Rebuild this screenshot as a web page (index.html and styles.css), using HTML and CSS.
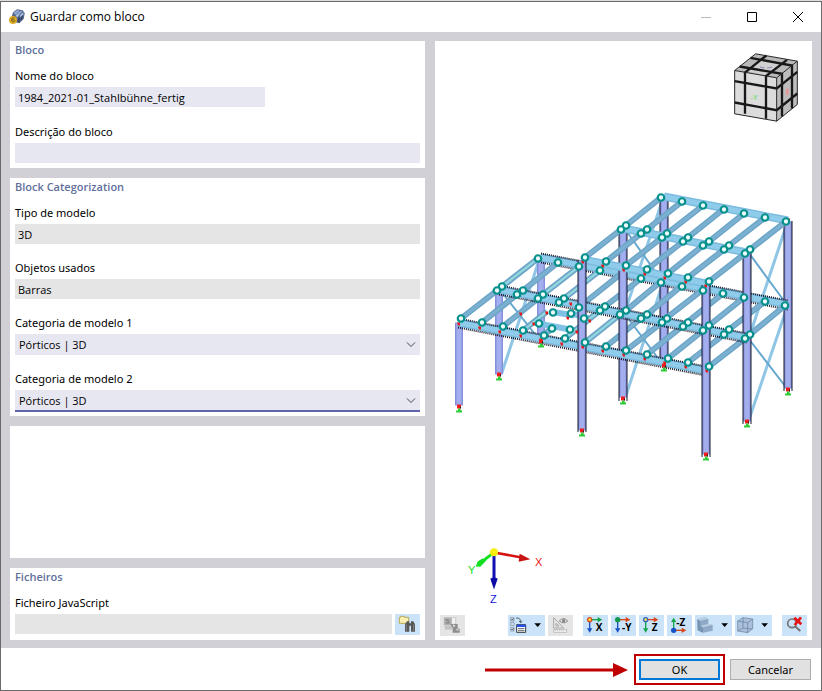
FILE: index.html
```html
<!DOCTYPE html>
<html lang="pt">
<head>
<meta charset="utf-8">
<title>Guardar como bloco</title>
<link rel="stylesheet" href="styles.css">
</head>
<body>
<main class="window">
  <header class="titlebar">
    <svg class="app-icon" viewBox="0 0 48 48" aria-hidden="true">
      <path fill="#53678c" d="M12 10 24 1l17 3 6 9-3 17-13 13-15-4L9 20z"/>
      <path fill="#8fa9d4" d="M13 11 25 3l7 2-12 12zM27 11l8-6 5 2-9 10z"/>
      <path fill="#a8bedf" d="M20 19l8-7 3 6-7 8zM33 18l9-8 2 6-10 9z"/>
      <path fill="#2c3b58" d="M29 25l4 1-2 14-5-1zM37 23l5-4-3 12-4 3z"/>
      <circle cx="12" cy="33" r="12" fill="#dbab28"/>
      <path fill="none" stroke="#7b5b12" stroke-width="3" d="M16 27c-6-2-9 2-8 8 1 5 9 4 9 0s-7-4-9-1"/>
    </svg>
    <h1 class="title">Guardar como bloco</h1>
    <div class="window-controls">
      <button class="win-btn" aria-label="Minimizar" disabled><svg viewBox="0 0 12 12"><path d="M1 6.500H11" stroke="#bbb"/></svg></button>
      <button class="win-btn" aria-label="Maximizar"><svg viewBox="0 0 12 12"><path d="M1.500 1.500h9v9h-9z" stroke="#000" fill="none"/></svg></button>
      <button class="win-btn" aria-label="Fechar"><svg viewBox="0 0 12 12"><path d="M1 1l10 10M11 1 1 11" stroke="#000"/></svg></button>
    </div>
  </header>

  <div class="content">
    <form class="column">
      <section class="panel panel-block">
        <h2 class="panel-title">Bloco</h2>
        <div class="fields fields-wide">
          <div class="field">
            <label for="name">Nome do bloco</label>
            <input class="box box-name" id="name" type="text" value="1984_2021-01_Stahlbühne_fertig">
          </div>
          <div class="field">
            <label for="desc">Descrição do bloco</label>
            <input class="box" id="desc" type="text">
          </div>
        </div>
      </section>
      <section class="panel panel-category">
        <h2 class="panel-title">Block Categorization</h2>
        <div class="fields">
          <div class="field">
            <label for="type">Tipo de modelo</label>
            <input class="box box-readonly" id="type" type="text" value="3D" readonly>
          </div>
          <div class="field">
            <label for="objects">Objetos usados</label>
            <input class="box box-readonly" id="objects" type="text" value="Barras" readonly>
          </div>
          <div class="field">
            <label for="cat1">Categoria de modelo 1</label>
            <div class="select-wrap">
              <select class="box select" id="cat1"><option>Pórticos | 3D</option></select>
              <svg class="chevron" viewBox="0 0 10 6" aria-hidden="true"><path d="M1 .5l4 4 4-4"/></svg>
            </div>
          </div>
          <div class="field">
            <label for="cat2">Categoria de modelo 2</label>
            <div class="select-wrap">
              <select class="box select select-active" id="cat2"><option>Pórticos | 3D</option></select>
              <svg class="chevron" viewBox="0 0 10 6" aria-hidden="true"><path d="M1 .5l4 4 4-4"/></svg>
            </div>
          </div>
        </div>
      </section>
      <section class="panel"></section>
      <section class="panel panel-block">
        <h2 class="panel-title">Ficheiros</h2>
        <div class="fields">
          <div class="field">
            <label for="file">Ficheiro JavaScript</label>
            <div class="file-row">
              <input class="box box-readonly" id="file" type="text" readonly>
              <button class="tool" type="button" aria-label="Procurar ficheiro">
                <svg class="icon" viewBox="0 0 75 63">
                  <path fill="#faf0b4" stroke="#b9aa55" stroke-width="3" d="M13 10h4V7h11v3h13v18H13z"/>
                  <path fill="#575757" d="M36 22h7v6h5v-6h7l5 9v22H48V35h-5v18H30V31z"/>
                  <path stroke="#999" stroke-width="2" d="M34 31v19M56 31v19"/>
                </svg>
              </button>
            </div>
          </div>
        </div>
      </section>
    </form>

    <section class="panel preview">
      <svg class="scene" viewBox="435 41 377 568" role="img" aria-label="Modelo 3D">
        <defs>
          <marker id="node" markerUnits="userSpaceOnUse" markerWidth="12" markerHeight="12" refX="6" refY="6">
            <circle cx="6" cy="6" r="3.250" fill="#eefafa" stroke="#07918d" stroke-width="2.200"/>
          </marker>
          <marker id="hinge" markerUnits="userSpaceOnUse" markerWidth="4" markerHeight="4" refX="2" refY="2">
            <path fill="#e81818" d="M0 1h3v3H1z"/>
          </marker>
          <g id="support"><path fill="#ef1c1c" d="M-2-3h4v4h-4z"/><path fill="#222" d="M1-1h1v2H1z"/><path fill="#2fcc38" d="M-1 1h2l1 2h1v2h-6V3h2z"/></g>
          <path id="roof-back" d="M664 196L788 220"/>
          <path id="roof-mid" d="M623 228L747 252"/>
          <path id="roof-front" d="M582 259L706 283"/>
          <path id="floor-back" d="M541 257L788 304"/>
          <path id="floor-mid" d="M499 289L747 337"/>
          <path id="floor-front" d="M458 322L706 370"/>
          <path id="columns-left" d="M541 256V338M499 290V374M459 322V405"/>
          <path id="columns-back" d="M664 197V364M788 221V388"/>
          <path id="columns-mid" d="M623 228V397M747 252V421"/>
          <path id="columns-front" d="M582 260V430M706 285V454"/>
          <path id="roof-purlins" d="M661 197l-35 28M682 201l-35 28M703 205l-36 28M723 209l-35 28M744 213l-35 28M765 217l-36 28M786 221l-36 28M621 229l-36 28M641 233l-35 28M662 237l-36 28M683 241l-36 28M703 245l-35 28M724 249l-36 28M745 253l-36 28"/>
          <path id="floor-purlins" d="M538 258l-36 28M558 262l-35 28M579 266l-36 28M600 270l-36 28M620 274l-35 28M641 278l-36 28M661 281l-35 29M682 285l-35 29M703 289l-36 28M723 293l-35 28M744 297l-35 28M765 301l-36 28M785 305l-35 29M497 290l-36 28M517 294l-35 28M538 298l-35 28M547 311l-24 19M552 328l-8 6M600 310l-35 28M620 314l-35 28M641 318l-35 28M662 322l-36 28M682 326l-35 28M703 330l-35 28M724 334l-36 28M745 338l-36 28"/>
        </defs>

        <g class="brace">
          <path d="M786 226L750 334M786 310L749 419M662 201L626 308M662 285L626 395M539 260L502 372"/>
          <path class="brace-thin" d="M750 254l36 49M750 340l37 48M626 230l35 49M626 315l36 48M502 292l38 48"/>
        </g>

        <use href="#columns-left" class="column-edge"/><use href="#columns-left" class="column-face"/>
        <use href="#columns-back" class="column-edge"/><use href="#columns-back" class="column-face"/>
        <path class="dots" d="M660 198V366M668 198V366M784 221V390M792 221V390"/>
        <use href="#roof-back" class="beam-edge"/><use href="#roof-back" class="beam-face"/>
        <use href="#floor-back" class="beam-edge"/><use href="#floor-back" class="beam-face"/>
        <path class="dots" d="M541 253l247 47M541 262l247 47"/>

        <g class="small-beam"><path d="M550 311l24 4M536 322l16 4M549 325l26 5M572 313l17 5"/></g>
        <use href="#floor-purlins" class="purlin-edge"/><use href="#floor-purlins" class="purlin-face"/>
        <path class="purlin-glow" d="M538 258l-36 28M579 266l-36 28M600 270l-36 28M547 311l-24 19M600 310l-35 28M620 314l-35 28"/>

        <use href="#columns-mid" class="column-edge"/><use href="#columns-mid" class="column-face"/>
        <path class="dots" d="M619 229V400M627 229V400M743 252V423M751 252V423"/>
        <use href="#floor-mid" class="beam-edge"/><use href="#floor-mid" class="beam-face"/>
        <path class="dots" d="M499 285l248 48M499 294l248 48"/>
        <use href="#roof-mid" class="beam-edge"/><use href="#roof-mid" class="beam-face"/>
        <use href="#roof-purlins" class="purlin-edge"/><use href="#roof-purlins" class="purlin-face"/>
        <use href="#roof-front" class="beam-edge"/><use href="#roof-front" class="beam-face"/>
        <use href="#floor-front" class="beam-edge"/><use href="#floor-front" class="beam-face"/>
        <path class="dots" d="M458 318l248 48M458 327l248 48"/>
        <use href="#columns-front" class="column-edge"/><use href="#columns-front" class="column-face"/>
        <path class="dots" d="M578 260V432M586 260V432M702 285V456M710 285V456"/>

        <polyline class="hinges" points="459,323 480,327 500,331 521,335 541,339 562,343 583,346 603,350 624,354 645,358 665,362 686,366 707,370"/>
        <polyline class="hinges" points="583,261 603,265 624,269 645,273 665,277 686,281 706,285"/>
        <polyline class="hinges" points="685,200 705,204 726,208 747,212 767,216 789,219"/>
        <polyline class="hinges" points="521,313 547,312 568,317 571,303 590,320 577,331 534,323"/>

        <polyline class="nodes" points="661,197 682,201 703,205 724,209 744,213 765,217 786,221"/>
        <polyline class="nodes" points="626,225 647,229 667,233 688,237 709,241 729,245 750,249"/>
        <polyline class="nodes" points="621,229 641,233 662,237 683,241 703,245 724,249 745,253"/>
        <polyline class="nodes" points="585,257 606,261 626,265 647,269 668,273 688,277 709,281"/>
        <polyline class="nodes" points="538,258 558,262 579,266 600,270"/>
        <polyline class="nodes" points="641,278 661,282 682,286 703,290 723,293 744,297 765,301 785,305"/>
        <polyline class="nodes" points="502,286 523,290 543,294 564,298 579,307 605,306 626,310 647,314 667,318 688,322 709,325 729,329 750,334"/>
        <polyline class="nodes" points="497,290 517,294 538,298 559,302 600,310 620,314 641,318 662,322 683,326 703,330 724,334 745,338"/>
        <polyline class="nodes" points="461,318 482,322 503,326 523,330 544,335 565,338 585,342 606,346 626,350 647,354 668,358 688,362 709,366"/>
        <polyline class="nodes" points="553,312 571,313 584,318 570,329 552,328 539,323"/>

        <use href="#support" x="459" y="407"/><use href="#support" x="499" y="375"/><use href="#support" x="541" y="342"/>
        <use href="#support" x="582" y="431"/><use href="#support" x="623" y="399"/><use href="#support" x="664" y="366"/>
        <use href="#support" x="706" y="455"/><use href="#support" x="747" y="422"/><use href="#support" x="788" y="390"/>

        <g transform="translate(715 0) scale(.3333)">
          <path fill="#dcdcdc" d="M59 210L185 232V362L59 340z"/>
          <path fill="#b9b9b9" d="M59 210L122 160 247 182 185 232z"/>
          <path fill="#bdbdbd" d="M185 232L247 182V312L185 362z"/>
          <path fill="#d0d0d0" d="M90 211L137 174 202 186 155 224z"/>
          <g fill="none" stroke="#181818" stroke-width="7">
            <path d="M90 340V216L154 165M153 355V227L216 178"/>
            <path d="M59 242L185 264 247 214M59 306L185 329 247 279"/>
            <path d="M74 198L201 220V348M106 172L231 195V324"/>
          </g>
          <path fill="none" stroke="#252525" stroke-width="3" d="M59 210L122 160 247 182V312L185 362 59 340zL185 232V362M185 232L247 182"/>
          <text class="cube-label" x="107" y="298">-Y</text>
          <path fill="#e59a9a" d="M213 267l8-5v19l-8 4z"/>
          <path stroke="#9696c2" stroke-width="4" d="M135 200l14 2M156 203l15-3"/>
        </g>

        <g transform="translate(455 540) scale(.3333)">
          <path stroke="#10e020" stroke-width="9" d="M118 35L84 61"/>
          <path fill="#10e020" d="M94 60L76 79 62 78 68 63 82 54z"/>
          <path stroke="#d51212" stroke-width="8" d="M118 36L200 51"/>
          <path fill="#c91414" d="M194 40L226 56 191 64z"/>
          <path stroke="#1010b4" stroke-width="9" d="M117 38V120"/>
          <path fill="#0c0ca4" d="M106 115q11-8 22 0L117 147z"/>
          <circle cx="117" cy="35" r="12" fill="#f6ee0c"/>
        </g>
        <g class="axis-labels">
          <text fill="#ec1717" x="535" y="565">X</text>
          <text fill="#13dc22" x="468" y="573">Y</text>
          <text fill="#1717e0" x="490" y="602">Z</text>
        </g>
      </svg>

      <div class="toolbar">
        <button class="tool tool-off tool-first" aria-label="Texturas" disabled><svg class="icon" viewBox="0 0 75 63">
          <path fill="#d2d2d2" d="M11 6h38v25H11z"/><path fill="#b0b0b0" d="M12 8h23v22H12z"/><path fill="#909090" d="M17 12h9v6h-9zM17 22l12-5v9H17z"/><path fill="#f0f0f0" d="M36 9h9v17h-9z"/><path fill="#c4c4c4" d="M14 31h22v13H14z"/><path fill="#8d8d8d" d="M31 27h22v13H38zM38 38l21 3v12H38z"/><path fill="#efefef" d="M39 28l8 5-7 3zM46 43h9v5z"/></svg></button>
        <button class="tool tool-wide" aria-label="Opções de visualização"><svg class="icon icon-wide" viewBox="0 0 111 63">
          <path fill="none" stroke="#7d8793" stroke-width="2" d="M8 8h10v10H8zM8 22h10v10H8zM8 38h10v10H8z"/><path fill="none" stroke="#222" stroke-width="2" d="M10 12l3 3 4-5M10 42l3 3 4-5M24 9q14-2 14 13M33 18l5 5 5-5"/><path fill="#fff" stroke="#33383d" stroke-width="3" d="M26 29h27v23H26z"/><path fill="#2451ed" d="M27 29h26v7H27z"/><path stroke="#59616a" stroke-width="3" d="M30 41h19M30 47h19"/><path d="M79 25h20L89 36z"/></svg></button>
        <button class="tool tool-off" aria-label="Medir" disabled><svg class="icon" viewBox="0 0 75 63">
          <path fill="none" stroke="#aaa" stroke-width="3" d="M17 8V39H47zM24 25v8h9z"/><path fill="#f4f4f4" stroke="#aaa" stroke-width="2" d="M17 43h39v9H17z"/><path stroke="#aaa" stroke-width="2" d="M23 44v4M29 44v4M35 44v4M41 44v4M47 44v4"/><path fill="#eee" stroke="#858585" stroke-width="3" d="M34 18q13-14 25 0-12 11-25 0z"/><circle cx="47" cy="17" r="5" fill="#858585"/></svg></button>
        <button class="tool tool-group" aria-label="Vista em X"><svg class="icon axis" viewBox="0 0 75 63">
          <path stroke="#12a64c" d="M20 14h27"/><path fill="#12a64c" d="M44 6l14 8-14 8z"/><path stroke="#1850c7" d="M20 14v30"/><path fill="#1850c7" d="M12 40h16l-8 13z"/><circle cx="20" cy="14" r="6" fill="#ffe64b" stroke="#dc4415"/><text x="38" y="48">X</text></svg></button>
        <button class="tool" aria-label="Vista em -Y"><svg class="icon axis" viewBox="0 0 75 63">
          <path stroke="#d94517" d="M20 14h27"/><path fill="#d94517" d="M44 6l14 8-14 8z"/><path stroke="#1850c7" d="M20 14v30"/><path fill="#1850c7" d="M12 40h16l-8 13z"/><circle cx="20" cy="14" r="8" fill="#12984b"/><text x="33" y="48">-Y</text></svg></button>
        <button class="tool" aria-label="Vista em Z"><svg class="icon axis" viewBox="0 0 75 63">
          <path stroke="#d94517" d="M20 14h27"/><path fill="#d94517" d="M44 6l14 8-14 8z"/><path stroke="#12a64c" d="M20 14v30"/><path fill="#12a64c" d="M12 40h16l-8 13z"/><circle cx="20" cy="14" r="6" fill="#ffe64b" stroke="#315fc4"/><text x="38" y="48">Z</text></svg></button>
        <button class="tool" aria-label="Vista em -Z"><svg class="icon axis" viewBox="0 0 75 63">
          <path stroke="#d94517" d="M20 46h27"/><path fill="#d94517" d="M44 38l14 8-14 8z"/><path stroke="#12a64c" d="M20 46V18"/><path fill="#12a64c" d="M12 21h16L20 8z"/><circle cx="20" cy="46" r="8" fill="#1850c7"/><text x="28" y="33">-Z</text></svg></button>
        <button class="tool tool-wide" aria-label="Modo de apresentação"><svg class="icon icon-wide" viewBox="0 0 111 63">
          <path fill="#8fa9c6" d="M7 13L31 7l9 6v13l13 5v16l-29 6-16-7z"/><path fill="#b9cde2" d="M7 13L31 7l9 6-24 6zM16 33l24-7 13 5-29 7z"/><path fill="#7894b3" d="M7 13l9 6v14l8 5v15L8 46z"/><path fill="none" stroke="#6d88a8" stroke-width="1" d="M16 19l24-6M24 38l29-7"/><path d="M79 25h20L89 36z"/></svg></button>
        <button class="tool tool-wide" aria-label="Vista isométrica"><svg class="icon icon-wide" viewBox="0 0 111 63">
          <path fill="#abc0da" stroke="#617d9f" stroke-width="2" d="M8 18L24 8l29 4v29L38 53 8 48z"/><path fill="none" stroke="#617d9f" stroke-width="2" d="M8 18l30 5 15-11M38 23v30M24 8v31M8 48l16-9 29 3"/><path d="M79 25h20L89 36z"/></svg></button>
        <button class="tool tool-group" aria-label="Repor vista"><svg class="icon" viewBox="0 0 75 63">
          <circle cx="30" cy="25" r="13" fill="none" stroke="#737373" stroke-width="5"/><path stroke="#737373" stroke-width="6" d="M39 34l16 14"/><path stroke="#e91313" stroke-width="8" d="M37 8l21 20M57 7L38 30"/></svg></button>
      </div>
    </section>
  </div>

  <footer class="footer">
    <svg class="arrow" viewBox="0 0 143 14" aria-hidden="true"><path stroke="#c00000" stroke-width="3" d="M0 7h130"/><path fill="#c00000" d="M128 0l15 7-15 7z"/></svg>
    <button class="btn btn-primary">OK</button>
    <button class="btn">Cancelar</button>
  </footer>
</main>
</body>
</html>
```
FILE: styles.css
```css
* { box-sizing: border-box; }

body {
  margin: 0;
  padding-top: 1px;
  background: #dcdcda;
  color: #000;
  font: 11px/16px "Noto Sans", "Open Sans", sans-serif;
}

.window {
  display: flex;
  flex-direction: column;
  min-height: calc(100vh - 1px);
  border: 1px solid #6b6b6b;
  background: #fff;
}

button, input, select { font: inherit; color: inherit; border-radius: 0; }

.titlebar {
  display: flex;
  align-items: center;
  height: 30px;
  padding-left: 8px;
}
.app-icon { width: 16px; height: 16px; }
.title {
  flex: 1;
  margin: 0 0 0 5px;
  font-family: "Open Sans", sans-serif;
  font-size: 12px;
  font-weight: 400;
}
.window-controls { display: flex; }
.win-btn {
  display: grid;
  place-items: center;
  width: 46px;
  height: 30px;
  padding: 0;
  border: 0;
  background: none;
}
.win-btn svg { width: 12px; height: 12px; }

.content {
  flex: 1;
  display: grid;
  grid-template-columns: 415fr 377fr;
  gap: 10px;
  padding: 9px 9px 8px;
  background: #d1d0d6;
}
.column {
  display: grid;
  grid-template-rows: auto auto 1fr auto;
  gap: 10px;
  min-width: 0;
}
.panel { min-width: 0; background: #fff; }
.panel-block { padding: 0 5px 5px; }
.panel-category { padding: 0 5px 4px; }
.panel-title {
  margin: 0 0 9px;
  color: #5f6f9b;
  font-family: "Open Sans", sans-serif;
  font-size: 11px;
  font-weight: 600;
  line-height: 18px;
}
.fields { display: grid; gap: 16px; }
.fields-wide { gap: 17px; }
.field { display: grid; gap: 3px; }
.box {
  display: block;
  width: 100%;
  min-width: 0;
  height: 20px;
  padding: 0 3px;
  border: 0;
  outline: 0;
  background: #e7e7f2;
  font-family: "Open Sans", sans-serif;
}
.box-name { width: 250px; }
.box-readonly { background: #e5e5e5; }
.select-wrap { position: relative; }
.select { appearance: none; height: 21px; padding: 1px 4px 0; }
.select-active { height: 22px; border-bottom: 2px solid #6062ac; }
.chevron {
  position: absolute;
  top: 8px;
  right: 4px;
  width: 10px;
  height: 6px;
  fill: none;
  stroke: #444;
  pointer-events: none;
}
.file-row { display: flex; gap: 3px; }

.preview { display: flex; flex-direction: column; padding-bottom: 4px; }
.scene { display: block; flex: 1; width: 100%; min-height: 0; }
.toolbar { display: flex; gap: 3px; padding: 5px 5px 0; }
.tool {
  flex: none;
  width: 25px;
  height: 21px;
  padding: 0;
  border: 0;
  background: #cbe3f8;
}
.tool-wide { width: 37px; }
.tool-off { background: #e5e5e5; }
.tool-first { margin-right: auto; }
.tool-group { margin-left: 7px; }
.icon { display: block; width: 25px; height: 21px; }
.icon-wide { width: 37px; }
.axis { stroke-width: 4px; }
.axis text { font: 700 30px "Open Sans", sans-serif; }

.brace { fill: none; stroke: #8fc6e6; stroke-width: 3px; }
.brace-thin { stroke: #65a7ce; stroke-width: 2px; }
.column-edge { stroke: #8490db; stroke-width: 8px; }
.column-face { stroke: #a3aeee; stroke-width: 5px; }
.beam-edge { stroke: #7bbcdf; stroke-width: 8px; }
.beam-face { stroke: #8fcbea; stroke-width: 5px; }
.purlin-edge { stroke: #6ba5c8; stroke-width: 6px; }
.purlin-face { stroke: #7bb0d0; stroke-width: 3px; }
.purlin-glow { stroke: #94d9df; stroke-width: 2px; }
.small-beam { stroke: #7fc2e5; stroke-width: 6px; }
.dots { fill: none; stroke: #18182a; stroke-width: 2px; stroke-dasharray: 1px 1px; }
.nodes { fill: none; marker: url(#node); }
.hinges { fill: none; marker: url(#hinge); }
.cube-label { fill: #86dc8b; font: 700 22px "Noto Sans", sans-serif; }
.axis-labels { font: 11px "Liberation Sans", sans-serif; }

.footer {
  display: flex;
  align-items: center;
  justify-content: flex-end;
  gap: 10px;
  height: 42px;
  padding: 1px 10px 0;
}
.arrow { width: 143px; height: 14px; margin-right: 1px; }
.btn {
  width: 81px;
  height: 21px;
  padding: 0;
  border: 1px solid #adadad;
  background: #e1e1e1;
}
.btn-primary {
  border: 2px solid #0078d7;
  outline: 2px solid #c00000;
  outline-offset: 3px;
}
```
